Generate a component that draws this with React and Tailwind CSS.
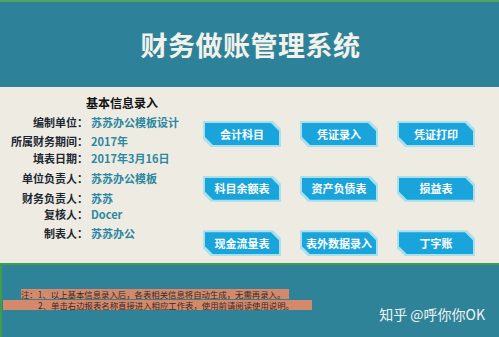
const info = [
  { label: "编制单位：", value: "苏苏办公模板设计", h: "h-[20px]" },
  { label: "所属财务期间：", value: "2017年", h: "h-[18px]" },
  { label: "填表日期：", value: "2017年3月16日", h: "h-[17px]" },
  { label: "单位负责人：", value: "苏苏办公模板", h: "h-[22px]" },
  { label: "财务负责人：", value: "苏苏", h: "h-[18px]" },
  { label: "复核人：", value: "Docer", h: "h-[15px]" },
  { label: "制表人：", value: "苏苏办公", h: "h-[22px]" },
];

const buttons = [
  "会计科目",
  "凭证录入",
  "凭证打印",
  "科目余额表",
  "资产负债表",
  "损益表",
  "现金流量表",
  "表外数据录入",
  "丁字账",
];

const cut =
  "[clip-path:polygon(0_0,calc(100%-8px)_0,100%_8px,100%_100%,8px_100%,0_calc(100%-8px))]";

function NavButton({ text }) {
  return (
    <div className={`h-[26px] w-[78px] bg-[#a9e0ee] p-[2px] ${cut}`}>
      <div
        className={`flex h-full w-full items-center justify-center bg-[#19a5db] text-[11px] font-bold text-white ${cut}`}
      >
        {text}
      </div>
    </div>
  );
}

export default function App() {
  return (
    <div className="flex h-[337px] w-[499px] flex-col overflow-hidden font-['Noto_Sans_CJK_SC',sans-serif]">
      <header className="flex h-[87px] shrink-0 items-center justify-center border-t-2 border-[#4fa55a] bg-[#2d8299] pt-[1px]">
        <h1 className="pl-[2px] text-[27px] font-bold tracking-[0.5px] text-[#f2f1ea]">
          财务做账管理系统
        </h1>
      </header>

      <main className="flex h-[176px] shrink-0 bg-[#eeebe2]">
        <section className="w-[196px] pt-[7px]">
          <div className="flex h-[18px] items-center pl-[86px] text-[12px] font-bold text-[#111]">
            基本信息录入
          </div>
          {info.map((row) => (
            <div key={row.label} className={`flex items-center ${row.h}`}>
              <span className="w-[88px] text-right text-[11px] font-bold text-[#1c2733]">
                {row.label}
              </span>
              <span className="pl-[3px] text-[11px] font-bold text-[#2b88a1]">{row.value}</span>
            </div>
          ))}
        </section>
        <section className="grid grid-cols-[78px_78px_78px] gap-x-[19px] gap-y-[22px] pl-[7px] pt-[34px]">
          {buttons.map((b) => (
            <NavButton key={b} text={b} />
          ))}
        </section>
      </main>

      <footer className="relative flex-1 border-l-2 border-t-2 border-[#3f9c48] bg-[#2e8399]">
        <div className="flex flex-col gap-[1px] pt-[24px] text-[8.4px] leading-[10px] text-[#3a2a1f]">
          <div className="ml-[19px] w-fit bg-[#d4896c] pr-[4px]">
            注：1、以上基本信息录入后，各表相关信息将自动生成，无需再录入。
          </div>
          <div className="ml-[1px] w-[309px] bg-[#d4896c] pl-[35px]">
            2、单击右边报表名称直接进入相应工作表，使用前请阅读使用说明。
          </div>
        </div>
        <div className="absolute bottom-[12px] right-[14px] text-[14px] text-[#eef4f4]">
          知乎 @呼你你OK
        </div>
      </footer>
    </div>
  );
}
